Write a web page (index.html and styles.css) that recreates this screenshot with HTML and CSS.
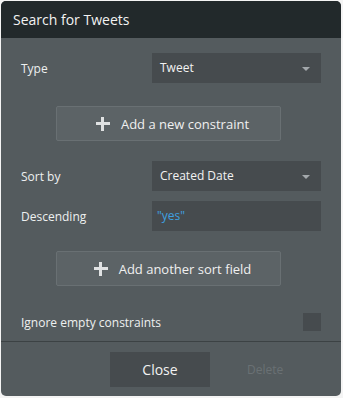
FILE: index.html
```html
<!DOCTYPE html>
<html>
<head>
<meta charset="utf-8">
<link rel="stylesheet" href="styles.css">
</head>
<body>
<div class="dialog">
  <div class="header">Search for Tweets</div>
  <div class="body">
    <div class="row">
      <div class="label">Type</div>
      <div class="select">Tweet<span class="caret"></span></div>
    </div>
    <div class="btnrow first">
      <div class="addbtn"><span class="plus"></span>Add a new constraint</div>
    </div>
    <div class="row">
      <div class="label">Sort by</div>
      <div class="select">Created Date<span class="caret"></span></div>
    </div>
    <div class="row row-tight">
      <div class="label">Descending</div>
      <div class="select input">"yes"</div>
    </div>
    <div class="btnrow second">
      <div class="addbtn"><span class="plus"></span>Add another sort field</div>
    </div>
    <div class="checkrow">
      <div class="label wide">Ignore empty constraints</div>
      <div class="checkbox"></div>
    </div>
  </div>
  <div class="footer">
    <div class="close">Close</div>
    <div class="delete">Delete</div>
  </div>
</div>
</body>
</html>
```
FILE: styles.css
```css
html, body {
  margin: 0;
  padding: 0;
}
body {
  background: #f4f4f4;
  font-family: "Open Sans", "Noto Sans", sans-serif;
  width: 343px;
  height: 398px;
  overflow: hidden;
}
.dialog {
  margin: 1px 0 0 1px;
  width: 340px;
  height: 395px;
  border-radius: 5px;
  overflow: hidden;
  background: #545b5e;
  display: flex;
  flex-direction: column;
}
.header {
  height: 37px;
  background: #22292b;
  color: #f2f2f2;
  font-size: 14px;
  line-height: 37px;
  padding-left: 12px;
  box-sizing: border-box;
}
.body {
  padding: 15px 20px 0 20px;
  display: flex;
  flex-direction: column;
}
.row {
  display: flex;
  align-items: center;
  height: 30px;
}
.row-tight {
  margin-top: 10px;
}
.label {
  color: #eef0f0;
  font-size: 12px;
  width: 131px;
}
.label.wide {
  width: auto;
  flex: 1;
}
.select {
  position: relative;
  flex: 1;
  height: 30px;
  background: #464b4e;
  color: #f2f2f2;
  font-size: 12px;
  line-height: 30px;
  padding-left: 8px;
}
.input {
  color: #3ea0e0;
  padding-left: 5px;
}
.caret {
  position: absolute;
  right: 11px;
  top: 14px;
  width: 0;
  height: 0;
  border-left: 4px solid transparent;
  border-right: 4px solid transparent;
  border-top: 4px solid #a3a8ab;
}
.btnrow {
  display: flex;
  justify-content: flex-start;
  padding-left: 35px;
}
.btnrow.first {
  margin: 23px 0 20px;
}
.btnrow.second {
  margin: 20px 0 21px;
}
.addbtn {
  width: 225px;
  height: 35px;
  box-sizing: border-box;
  background: #5c6366;
  border: 1px solid #697073;
  border-radius: 2px;
  color: #f0f0f0;
  font-size: 13px;
  display: flex;
  align-items: center;
  justify-content: center;
  padding-left: 8px;
}
.plus {
  position: relative;
  width: 14px;
  height: 14px;
  margin-right: 11px;
}
.plus::before, .plus::after {
  content: "";
  position: absolute;
  background: #e0e2e3;
}
.plus::before {
  left: 0;
  top: 5.5px;
  width: 14px;
  height: 3px;
}
.plus::after {
  left: 5.5px;
  top: 0;
  width: 3px;
  height: 14px;
}
.checkrow {
  display: flex;
  align-items: center;
  height: 30px;
}
.checkbox {
  width: 18px;
  height: 18px;
  background: #464b4e;
}
.footer {
  margin-top: 4px;
  border-top: 1px solid #3c4244;
  flex: 1;
  display: flex;
  align-items: flex-start;
  padding-top: 10px;
  padding-left: 109px;
}
.close {
  width: 100px;
  height: 35px;
  background: #464b4e;
  color: #f2f2f2;
  font-size: 14px;
  line-height: 35px;
  text-align: center;
}
.delete {
  color: #6a7174;
  font-size: 12px;
  line-height: 35px;
  margin-left: 37px;
}
```
